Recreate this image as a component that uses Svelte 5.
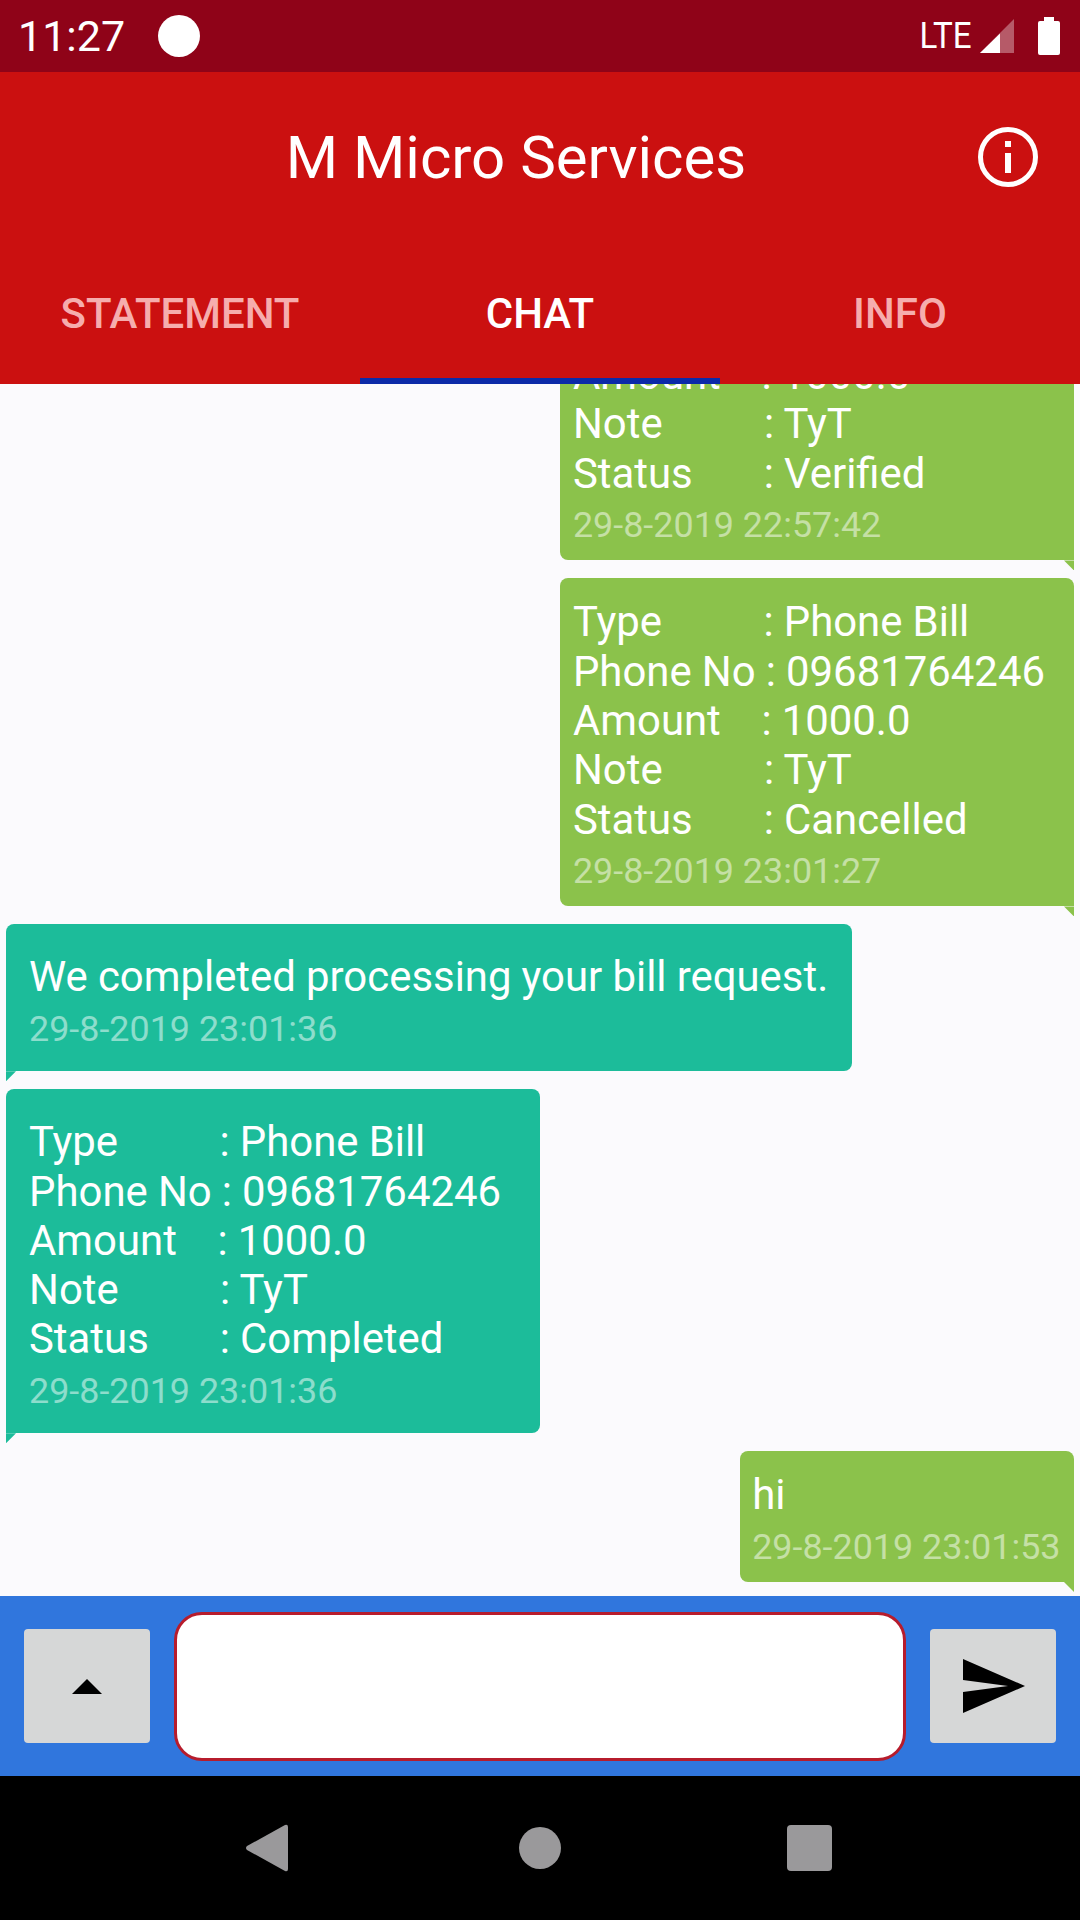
<script>
  const messages = [
    { side: 'out', bill: true, lines: ['Type          : Phone Bill', 'Phone No : 09681764246', 'Amount    : 1000.0', 'Note          : TyT', 'Status       : Verified'], time: '29-8-2019 22:57:42' },
    { side: 'out', bill: true, lines: ['Type          : Phone Bill', 'Phone No : 09681764246', 'Amount    : 1000.0', 'Note          : TyT', 'Status       : Cancelled'], time: '29-8-2019 23:01:27' },
    { side: 'in', lines: ['We completed processing your bill request.'], time: '29-8-2019 23:01:36' },
    { side: 'in', bill: true, lines: ['Type          : Phone Bill', 'Phone No : 09681764246', 'Amount    : 1000.0', 'Note          : TyT', 'Status       : Completed'], time: '29-8-2019 23:01:36' },
    { side: 'out', lines: ['hi'], time: '29-8-2019 23:01:53' }
  ];
  const tabs = ['STATEMENT', 'CHAT', 'INFO'];
</script>

<div class="screen">
  <header class="status">
    <span class="clock">11:27</span>
    <span class="dot"></span>
    <span class="lte">LTE</span>
    <svg class="signal" width="34" height="34" viewBox="0 0 34 34">
      <path d="M34 0V34H0Z" fill="#fff" opacity=".35" />
      <path d="M20 14.500V34H0Z" fill="#fff" />
    </svg>
    <svg class="battery" width="22" height="38" viewBox="0 0 22 38">
      <path d="M6 0H16V4H20Q22 4 22 6V36Q22 38 20 38H2Q0 38 0 36V6Q0 4 2 4H6Z" fill="#fff" />
    </svg>
  </header>

  <div class="appbar">
    <div class="toolbar">
      <h1>M Micro Services</h1>
      <svg width="60" height="60" viewBox="0 0 60 60">
        <circle cx="30" cy="30" r="27.500" fill="none" stroke="#fff" stroke-width="5" />
        <rect x="27" y="26" width="6" height="20" fill="#fff" />
        <rect x="27" y="14" width="6" height="6" fill="#fff" />
      </svg>
    </div>
    <nav class="tabs">
      {#each tabs as tab}
        <div class="tab" class:active={tab === 'CHAT'}>{tab}</div>
      {/each}
    </nav>
  </div>

  <main class="chat">
    {#each messages as m}
      <div class="bubble {m.side}" class:bill={m.bill}>
        {#each m.lines as line}
          <div class="line">{line}</div>
        {/each}
        <div class="time">{m.time}</div>
      </div>
    {/each}
  </main>

  <div class="composer">
    <button class="square" aria-label="more">
      <svg width="30" height="15" viewBox="0 0 30 15"><path d="M15 0L30 15H0Z" fill="#000" /></svg>
    </button>
    <div class="input"></div>
    <button class="square" aria-label="send">
      <svg class="send" width="62" height="54" viewBox="0 0 62 54"><path d="M0 0L62 27L0 54V33L45 27L0 21Z" fill="#000" /></svg>
    </button>
  </div>

  <footer class="nav">
    <svg width="42" height="48" viewBox="0 0 42 48"><path d="M39 1Q42 0 42 3V45Q42 48 39 47L1 26Q-1 24 1 22Z" fill="#9a999b" /></svg>
    <span class="home"></span>
    <span class="recent"></span>
  </footer>
</div>

<style>
  :global(body) { margin: 0; background: #000; }
  .screen {
    width: 1080px;
    height: 1920px;
    display: flex;
    flex-direction: column;
    overflow: hidden;
    font-family: Roboto, "Noto Sans", sans-serif;
    color: #fff;
  }
  .status {
    height: 72px;
    flex: none;
    background: #8f0318;
    display: flex;
    align-items: center;
    padding: 0 20px 0 18px;
    box-sizing: border-box;
  }
  .clock { font-size: 43px; width: 140px; }
  .dot { width: 42px; height: 42px; border-radius: 50%; background: #fff; }
  .lte {
    margin-left: auto;
    font-size: 36px;
    transform: scaleX(.92);
    transform-origin: right center;
    margin-right: 9px;
  }
  .signal { margin-right: 24px; }
  .appbar { flex: none; background: #cb1010; height: 312px; display: flex; flex-direction: column; position: relative; z-index: 1; }
  .toolbar {
    height: 170px;
    display: flex;
    align-items: center;
    padding: 0 42px 0 54px;
  }
  .toolbar h1 { flex: 1; margin: 0; font-size: 60px; font-weight: 400; text-align: center; }
  .tabs { display: flex; flex: 1; }
  .tab {
    flex: 1;
    display: flex;
    align-items: center;
    justify-content: center;
    font-size: 42px;
    font-weight: 500;
    color: #f6adad;
    position: relative;
  }
  .tab.active { color: #fff; }
  .tab.active::after { content: ""; position: absolute; left: 0; right: 0; bottom: 0; height: 6px; background: #0c2aa8; }
  .chat {
    flex: 1;
    min-height: 0;
    background: #fbfafd;
    display: flex;
    flex-direction: column;
    justify-content: flex-end;
    align-items: flex-start;
    gap: 18px;
    padding: 0 6px 14px;
    box-sizing: border-box;
    overflow: hidden;
  }
  .bubble { position: relative; flex: none; border-radius: 8px; }
  .bubble.out {
    align-self: flex-end;
    background: #8bc24b;
    padding: 19px 13.500px 14px 12.500px;
    border-bottom-right-radius: 0;
  }
  .bubble.out.bill { padding-right: 29px; }
  .bubble.in {
    background: #1cbc9a;
    padding: 28px 24px 21px 23px;
    border-bottom-left-radius: 0;
  }
  .bubble.in.bill { padding-right: 39px; }
  .bubble::after {
    content: "";
    position: absolute;
    top: 100%;
    width: 10px;
    height: 10px;
    background: inherit;
  }
  .bubble.out::after { right: 0; clip-path: polygon(0 0, 100% 0, 100% 100%); }
  .bubble.in::after { left: 0; clip-path: polygon(0 0, 100% 0, 0 100%); }
  .line { font-size: 41.900px; line-height: 49.300px; white-space: pre; word-spacing: -.25px; }
  .time { font-size: 35.900px; line-height: 42.200px; margin-top: 6.300px; color: rgba(255,255,255,.5); white-space: nowrap; }
  .composer {
    height: 180px;
    flex: none;
    background: #3076dd;
    display: flex;
    align-items: center;
    padding: 0 24px;
    box-sizing: border-box;
    gap: 24px;
  }
  .square {
    width: 126px;
    height: 114px;
    flex: none;
    border: 0;
    border-radius: 4px;
    background: #d6d7d7;
    padding: 0;
    display: flex;
    align-items: center;
    justify-content: center;
  }
  .send { margin-left: 2px; }
  .input {
    flex: 1;
    height: 149px;
    box-sizing: border-box;
    background: #fff;
    border: 3.500px solid #b71c2c;
    border-radius: 28px;
  }
  .nav {
    flex: none;
    height: 144px;
    background: #000;
    display: flex;
    align-items: center;
    padding: 0 0 0 246px;
  }
  .home { width: 42px; height: 42px; border-radius: 50%; background: #9a999b; margin: 0 226px 0 231px; }
  .recent { width: 45px; height: 46px; border-radius: 4px; background: #9a999b; }
</style>
